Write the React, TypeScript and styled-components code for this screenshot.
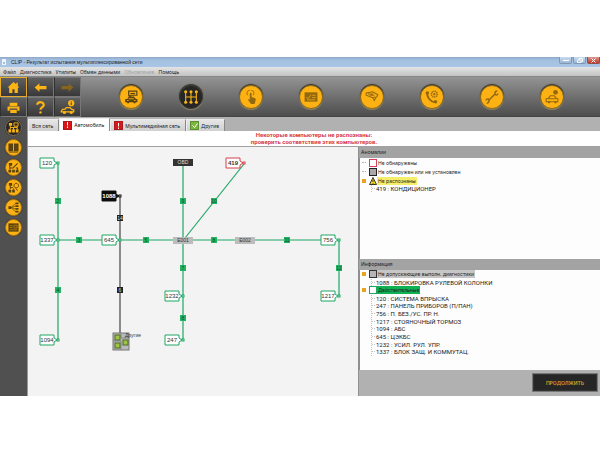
import React from 'react';
import styled, { createGlobalStyle, css } from 'styled-components';

const GREEN = '#1fa764';
const AMBER = '#fdb515';

const GlobalStyle = createGlobalStyle`
  * { box-sizing: border-box; }
  body { margin: 0; background: #fff; font: 5px/8px Inter, "Liberation Sans", Arial, sans-serif; color: #222; }
  button { font: inherit; color: inherit; border: 0; padding: 0; margin: 0; background: none; }
  ul { list-style: none; margin: 0; padding: 0; }
  svg { display: block; flex: none; }
`;

const Window = styled.div`
  margin-top: 57px;
  background: #b1b1b1;
  display: flex;
  flex-direction: column;
`;

const TitleBar = styled.header`
  display: flex;
  align-items: center;
  gap: 5px;
  height: 10px;
  padding-left: 2px;
  background: linear-gradient(#8fa9c8, #a3c0e1 30%, #aac6e6);
`;
const Title = styled.h1`
  margin: 0;
  flex: 1;
  font: 400 5px/8px "Liberation Sans", Arial, sans-serif;
  white-space: nowrap;
`;
const WindowButtons = styled.div`
  display: flex;
  gap: 1px;
  align-self: flex-start;
`;
const WindowButton = styled.button<{ $close?: boolean }>`
  width: 13px;
  height: 7px;
  display: grid;
  place-items: center;
  border: 1px solid ${p => (p.$close ? '#9b4b45' : '#8097b3')};
  border-top: 0;
  border-radius: 0 0 2px 2px;
  background: ${p => (p.$close ? 'linear-gradient(#dc9a8e, #c03a2c)' : 'linear-gradient(#c9dcf0, #9db7d4)')};
`;

const MenuBar = styled.nav`
  display: flex;
  gap: 4px;
  height: 10px;
  padding: 0 3px;
  background: linear-gradient(#e4e4e4, #c3c3c3);
  border-bottom: 1px solid #868686;
`;
const MenuItem = styled.button`
  white-space: nowrap;
  &:disabled { color: #a3a3a3; }
`;

const Toolbar = styled.div`
  display: flex;
  height: 40px;
  background: linear-gradient(#949494, #707070 50%, #4d4d4d);
  border-bottom: 1px solid #444;
`;
const NavGrid = styled.div`
  display: grid;
  grid-template-columns: repeat(3, 27px);
  grid-template-rows: repeat(2, 20px);
`;
const NavButton = styled.button<{ $active?: boolean }>`
  display: grid;
  place-items: center;
  color: ${AMBER};
  background: linear-gradient(#606060, #383838);
  border: 1px solid ${p => (p.$active ? '#e8ac2c' : '#777')};
  border-left-color: ${p => (p.$active ? '#e8ac2c' : '#303030')};
  &:disabled { color: #87651e; }
`;
const ModeRow = styled.div`
  flex: 1;
  display: flex;
  align-items: center;
  justify-content: space-between;
  padding: 0 36px 0 38px;
`;
const round = css<{ $dark?: boolean }>`
  display: grid;
  place-items: center;
  flex: none;
  border-radius: 50%;
  color: ${p => (p.$dark ? AMBER : '#5a4310')};
  background: ${p => (p.$dark ? '#262626' : '#fdb112')};
`;
const ModeButton = styled.button<{ $dark?: boolean; $strong?: boolean }>`
  ${round}
  width: 24px;
  height: 24px;
  border: 1px solid ${p => (p.$dark ? '#3b3b3b' : '#8a6a22')};
  box-shadow: 0 -1px 1px #3a3426, 0 1px 1px #8d8163;
  svg { opacity: ${p => (p.$strong || p.$dark ? 1 : 0.65)}; }
`;

const Body = styled.div`
  display: grid;
  grid-template-columns: 28px minmax(0, 1fr);
`;
const SideBar = styled.aside`
  display: flex;
  flex-direction: column;
  align-items: center;
  gap: 3px;
  padding: 2px 1px 0 0;
  background: #505050;
  border-right: 1px solid #999;
`;
const SideButton = styled.button<{ $dark?: boolean }>`
  ${round}
  width: 17px;
  height: 17px;
  border: 1px solid ${p => (p.$dark ? '#86735a' : '#a9771b')};
  box-shadow: 0 0 1px #251c0d;
`;

const Content = styled.main`
  display: flex;
  flex-direction: column;
  min-width: 0;
`;
const Tabs = styled.div`
  display: flex;
  align-items: flex-end;
  height: 14px;
`;
const Tab = styled.button<{ $active?: boolean }>`
  display: flex;
  align-items: center;
  gap: 2px;
  height: ${p => (p.$active ? 13 : 12)}px;
  padding: 0 5px 0 3px;
  white-space: nowrap;
  background: ${p => (p.$active ? '#fff' : 'linear-gradient(#e6e6e6, #d0d0d0)')};
  border: 1px solid #ededed;
  border-right-color: #888;
  border-bottom: 0;
`;
const StatusMark = styled.span<{ $ok?: boolean }>`
  width: 9px;
  height: 9px;
  display: grid;
  place-items: center;
  color: #fff;
  background: ${p => (p.$ok ? '#78b83a' : '#d9171b')};
  border: 1px solid ${p => (p.$ok ? '#5d8d35' : '#a91c1e')};
`;
const Message = styled.p`
  margin: 0;
  height: 16px;
  font: 700 6px/7px Roboto, "Liberation Sans", sans-serif;
  text-align: center;
  color: #d83a48;
  background: #fff;
  border-bottom: 1px solid #a0a0a0;
`;
const Split = styled.div`
  display: grid;
  grid-template-columns: minmax(0, 1fr) 241px;
`;
const Canvas = styled.section`
  background: #f3f3f3;
  overflow: hidden;
  border-right: 1px solid #8f8f8f;
`;
const Panels = styled.div`
  display: flex;
  flex-direction: column;
`;
const PanelTitle = styled.h2`
  margin: 0;
  height: 11px;
  padding: 0 2px;
  font-size: 5px;
  line-height: 11px;
  font-weight: 400;
  background: #a3a3a3;
`;
const PanelBody = styled.div`
  flex: 1;
  background: #fdfdfd;
  border-left: 1px solid #909090;
  padding: 0 2px;
`;
const Category = styled.div`
  display: flex;
  align-items: center;
  height: 9px;
  white-space: nowrap;
`;
const Expander = styled.button`
  width: 4px;
  height: 4px;
  margin-right: 3px;
  background: #eda21f;
`;
const Twig = styled.span`
  width: 4px;
  height: 1px;
  margin-right: 3px;
  border-top: 1px dotted #b5b5b5;
`;
const Swatch = styled.span<{ $line: string; $fill: string }>`
  width: 8px;
  height: 8px;
  border: 1px solid ${p => p.$line};
  background: ${p => p.$fill};
`;
const CategoryName = styled.span<{ $bg?: string }>`
  height: 8px;
  padding: 0 1px;
  background: ${p => p.$bg ?? 'transparent'};
`;
const Leaves = styled.ul`
  display: grid;
  grid-auto-rows: 1fr;
  font: 6px/7px Roboto, "Liberation Sans", sans-serif;
  margin-left: 9px;
  border-left: 1px dotted #c4c4c4;
`;
const LongLeaves = styled(Leaves)`
  height: 61px;
`;
const Leaf = styled.li`
  display: flex;
  align-items: center;
  gap: 1px;
  white-space: pre;
  &::before { content: ''; width: 3px; border-top: 1px dotted #c4c4c4; }
`;
const Footer = styled.footer`
  display: flex;
  justify-content: flex-end;
  height: 26px;
  padding: 3px 2px 4px;
  background: #b1b1b1;
`;
const Continue = styled.button`
  width: 66px;
  font-weight: 600;
  color: #dba324;
  background: #262626;
  border: 2px solid #343434;
  outline: 1px solid #777;
  outline-offset: -1px;
`;

type Art = { d?: string; fill?: string; extra?: React.ReactNode; w?: number };
const art: Record<string, Art> = {
  home: { fill: 'M12 2 1 12h3v10h6v-7h4v7h6V12h3l-3-3V3h-3v3z' },
  back: { fill: 'M1 12 10 4v5h13v6H10v5z' },
  next: { fill: 'M23 12 14 4v5H1v6h13v5z' },
  print: { fill: 'M5 3h14v6H5zM1 10h22v8h-4v-4H5v4H1zM6 16h12v6H6z' },
  help: { d: 'M6 7c0-7 13-6 12 1-1 4-6 4-6 8', w: 4, extra: <circle cx="12" cy="21" r="2.3" fill="currentColor" /> },
  carInfo: {
    d: 'M2 18l2-3h4l2-3h6l3 3 3 1v3H2z', w: 2,
    extra: <><circle cx="18" cy="5" r="5" fill="currentColor" /><path d="M18 2v1m0 1v4" stroke="#383838" strokeWidth="1.6" /><circle cx="7" cy="20" r="2.5" fill="currentColor" /><circle cx="18" cy="20" r="2.5" fill="currentColor" /></>,
  },
  carScreen: {
    fill: 'M2 16l4-1 3-4h8l3 4 3 1v5H2z',
    extra: <><path d="M8 2h14v7H12l-3 3V9H8z" fill="none" stroke="currentColor" strokeWidth="2" /><path d="M11 6h8" stroke="currentColor" strokeWidth="2" /><circle cx="7" cy="21" r="2" fill="currentColor" /><circle cx="18" cy="21" r="2" fill="currentColor" /><path d="M8 15h9M5 18h3M17 18h3" stroke="#fdb112" strokeWidth="1.5" /></>,
  },
  gear: {
    d: 'M4 5v14M12 5v14M20 5v14M4 12h16', w: 1.6,
    extra: <g fill="currentColor">{[4, 12, 20].map(x => <g key={x}><circle cx={x} cy="4" r="2.3" /><circle cx={x} cy="20" r="2.3" /></g>)}</g>,
  },
  touch: { d: 'M6 9a6 6 0 1 1 10 0', w: 1.5, fill: 'M10 6c0-2 3-2 3 0v6l6 2c2 1 1 5 0 7l-1 3h-6l-5-7c0-2 2-2 3 0z' },
  card: { fill: 'M1 4h22v16H1z', extra: <path d="M4 12l3 3 5-7M14 9h6M14 13h6M5 17h14" fill="none" stroke="#fdb112" strokeWidth="1.2" /> },
  key: { d: 'M2 5l11-2 9 5-2 4-8 1-10-4zM13 13l3 5 3-6M5 7h9M8 9h8', w: 1.8 },
  phone: {
    d: 'M4 4c-2 8 6 17 14 17', w: 3,
    extra: <><circle cx="4" cy="5" r="3" fill="currentColor" /><circle cx="18" cy="20" r="3" fill="currentColor" /><circle cx="16" cy="7" r="5" fill="none" stroke="currentColor" strokeWidth="2.5" strokeDasharray="2 1" /><circle cx="16" cy="7" r="2" fill="currentColor" /></>,
  },
  wrench: { d: 'M6 18 18 6M2 18c0-4 6-3 5 1-1 3-3 4-4 3M22 6c0 4-6 3-5-1 1-3 3-4 4-3', w: 2.5 },
  carTool: {
    d: 'M2 15l4-1 3-4h7l3 4 3 1v5H2zM6 15h13', w: 1.8,
    extra: <><circle cx="18" cy="4" r="4" fill="currentColor" /><circle cx="7" cy="21" r="2" fill="currentColor" /><circle cx="18" cy="21" r="2" fill="currentColor" /></>,
  },
  network: { fill: 'M2 2h7v6H2zM1 16h6v7H1zM9 16h6v7H9zM17 16h6v7h-6z', d: 'M5 8v8M12 12v4M20 9v7M5 12h15M13 2h9v7h-9z', w: 2 },
  book: { fill: 'M1 3h10v17H1zM13 3h10v17H13z', d: 'M2 22h20', w: 2 },
  edit: { fill: 'M2 2h7v6H2zM1 17h6v6H1zM9 17h6v6H9zM17 17h6v6h-6z', d: 'M4 8v8M4 13h8M11 13 21 3M17 13h4v4', w: 2.4 },
  scan: { fill: 'M2 2h7v6H2zM1 17h6v6H1zM9 17h6v6H9z', d: 'M5 8v8M5 12h6M12 17v-3M18 13a5 5 0 1 1 .1 0M17 14l4 5', w: 2 },
  tree: { fill: 'M1 9h6v6H1zM16 1h7v4h-7zM16 7h7v4h-7zM16 13h7v4h-7zM16 19h7v4h-7z', d: 'M7 12l9-9M7 12l9-3M7 12l9 3M7 12l9 9', w: 1.5 },
  screen: { fill: 'M1 3h22v18H1z', extra: <path d="M4 8h6M4 12h6M13 7h7v6h-7zM4 17h16" fill="none" stroke="#fdb112" strokeWidth="1" /> },
};
const Glyph = ({ name, size }: { name: string; size: number }) => {
  const a = art[name];
  return (
    <svg width={size} height={size} viewBox="0 0 24 24" aria-hidden="true">
      {a.fill && <path d={a.fill} fill="currentColor" />}
      {a.d && <path d={a.d} fill="none" stroke="currentColor" strokeWidth={a.w} />}
      {a.extra}
    </svg>
  );
};

const Warning = () => (
  <svg width="8" height="8" viewBox="0 0 16 16" aria-hidden="true">
    <path d="M8 1 15 15H1z" fill="#f2d71f" stroke="#222" strokeWidth="1.8" />
    <path d="M8 6v4M8 12v1.5" stroke="#222" strokeWidth="1.8" />
  </svg>
);

const DiagramText = styled.text<{ $size: number }>`
  font-family: "Liberation Sans", Arial, sans-serif;
  font-size: ${p => p.$size}px;
  text-anchor: middle;
`;

type TagProps = { x: number; y: number; id: string; kind?: 'ok' | 'lost' | 'blocked' };
const Tag = ({ x, y, id, kind = 'ok' }: TagProps) => {
  const line = kind === 'ok' ? GREEN : kind === 'lost' ? '#d6404c' : '#111';
  return (
    <g>
      <path
        d={`M${x - 18} ${y - 5}h14v3l3 2-3 2v3h-14z`}
        fill={kind === 'blocked' ? '#0b0b0b' : '#fff'} stroke={line}
      />
      <rect x={x - 1} y={y - 1} width="2" height="2" fill="#fff" stroke={line} />
      <DiagramText $size={6} x={x - 11} y={y + 2} fill={kind === 'blocked' ? '#fff' : '#333'} fontWeight={kind === 'ok' ? 400 : 700}>{id}</DiagramText>
    </g>
  );
};
const Hub = ({ x, y, id, dark }: { x: number; y: number; id: string; dark?: boolean }) => (
  <g>
    <rect x={x - 10} y={y - 4} width="20" height="7" fill={dark ? '#333' : '#bcbcbc'} />
    <DiagramText $size={5} x={x} y={y + 1} fill={dark ? '#ddd' : '#333'}>{id}</DiagramText>
  </g>
);
const Joint = ({ x, y, id, dark }: { x: number; y: number; id: string; dark?: boolean }) => (
  <g>
    <rect x={x - 3} y={y - 3} width="6" height="6" fill={dark ? '#222' : '#22b262'} />
    <DiagramText $size={5} x={x} y={y + 2} fill={dark ? '#ddd' : '#0b4f2b'}>{id}</DiagramText>
  </g>
);

const joints: [number, number, string, boolean?][] = [
  [30, 54, '2'], [51, 93, '3'], [30, 143, '4'], [92, 71, '14', true], [118, 93, '5'], [92, 143, '6', true],
  [155, 54, '9'], [186, 54, '10'], [186, 93, '8'], [259, 93, '11'], [155, 121, '7'], [311, 121, '12'], [155, 171, '8'],
];

const Diagram = () => (
  <svg width="331" height="249" viewBox="0 0 331 249" role="img" aria-label="Автомобиль">
    <path d="M30 16V193M30 93H311V149M155 16V193M157 91 216 17" fill="none" stroke={GREEN} strokeWidth="1.2" />
    <path d="M92 49V187" stroke="#444" strokeWidth="1.2" />
    {joints.map(([x, y, id, dark], i) => <Joint key={i} x={x} y={y} id={id} dark={dark} />)}
    <Hub x={155} y={16} id="OBD" dark />
    <Hub x={155} y={94} id="E001" />
    <Hub x={217} y={94} id="E002" />
    <Tag x={30} y={16} id="120" />
    <Tag x={30} y={93} id="1337" />
    <Tag x={30} y={193} id="1094" />
    <Tag x={92} y={49} id="1088" kind="blocked" />
    <Tag x={92} y={93} id="645" />
    <Tag x={216} y={16} id="419" kind="lost" />
    <Tag x={155} y={149} id="1232" />
    <Tag x={155} y={193} id="247" />
    <Tag x={311} y={93} id="756" />
    <Tag x={311} y={149} id="1217" />
    <rect x="85" y="186" width="16" height="17" fill="#b9b9b9" stroke="#777" />
    <path d="M85 194h8v9M93 186v5h8" fill="none" stroke="#888" />
    {[[87, 188], [87, 196], [95, 193]].map(([x, y]) => (
      <rect key={`${x}-${y}`} x={x} y={y} width="5" height="5" fill="#9fc343" stroke="#4d6a2a" />
    ))}
    <DiagramText $size={5} x={105} y={190} fill="#333">Другие</DiagramText>
  </svg>
);

const menus = ['Файл', 'Диагностика', 'Утилиты', 'Обмен данными', 'Обновление', 'Помощь'];
const nav = [['home', 'Главная'], ['back', 'Назад'], ['next', 'Вперёд'], ['print', 'Печать'], ['help', 'Справка'], ['carInfo', 'Сведения']];
const modes = ['carScreen', 'gear', 'touch', 'card', 'key', 'phone', 'wrench', 'carTool'];
const tools = ['network', 'book', 'edit', 'scan', 'tree', 'screen'];
const found = [
  '120 : СИСТЕМА ВПРЫСКА', '247 : ПАНЕЛЬ ПРИБОРОВ (П/ПАН)', '756 : П. БЕЗ./УС. ПР. Н.', '1217 : СТОЯНОЧНЫЙ ТОРМОЗ',
  '1094 : АБС', '645 : ЦЭКБС', '1232 : УСИЛ. РУЛ. УПР.', '1337 : БЛОК ЗАЩ. И КОММУТАЦ.',
];

const Alert = () => (
  <StatusMark><svg width="3" height="6" viewBox="0 0 3 6"><path d="M1.5 0v3.5M1.5 4.5V6" stroke="currentColor" /></svg></StatusMark>
);

export default function App() {
  return (
    <>
      <GlobalStyle />
      <Window>
        <TitleBar>
          <svg width="4" height="6" viewBox="0 0 4 6" aria-hidden="true"><path d="M0 0h4v6H0z" fill="#eef3f8" /><path d="M1 4h2" stroke="#7b8ba0" /></svg>
          <Title>CLIP - Результат испытания мультиплексированной сети</Title>
          <WindowButtons>
            <WindowButton aria-label="Свернуть"><svg width="6" height="3"><path d="M0 1h6v1H0z" fill="#fff" /></svg></WindowButton>
            <WindowButton aria-label="Развернуть"><svg width="6" height="5" viewBox="0 0 6 5"><path d="M2 2V.5h3.5v3H4M.5 2H4v2.5H.5z" fill="none" stroke="#f6f9fc" /></svg></WindowButton>
            <WindowButton $close aria-label="Закрыть"><svg width="5" height="5" viewBox="0 0 5 5"><path d="M.5.5l4 4M4.5.5l-4 4" stroke="#fff" /></svg></WindowButton>
          </WindowButtons>
        </TitleBar>
        <MenuBar>
          {menus.map(m => <MenuItem key={m} disabled={m === 'Обновление'}>{m}</MenuItem>)}
        </MenuBar>
        <Toolbar>
          <NavGrid>
            {nav.map(([n, label]) => (
              <NavButton key={n} $active={n === 'home'} disabled={n === 'next'} aria-label={label}><Glyph name={n} size={n === 'carInfo' ? 15 : 13} /></NavButton>
            ))}
          </NavGrid>
          <ModeRow>
            {modes.map(n => (
              <ModeButton key={n} $dark={n === 'gear'} $strong={n === 'carScreen'} aria-label={n}><Glyph name={n} size={n === 'gear' ? 16 : 14} /></ModeButton>
            ))}
          </ModeRow>
        </Toolbar>
        <Body>
          <SideBar>
            {tools.map(n => <SideButton key={n} $dark={n === 'network'} aria-label={n}><Glyph name={n} size={11} /></SideButton>)}
          </SideBar>
          <Content>
            <Tabs role="tablist">
              <Tab role="tab">Вся сеть</Tab>
              <Tab role="tab" $active aria-selected><Alert />Автомобиль</Tab>
              <Tab role="tab"><Alert />Мультимедийная сеть</Tab>
              <Tab role="tab">
                <StatusMark $ok><svg width="6" height="5" viewBox="0 0 6 5"><path d="M.5 2.5l2 2 3-4" fill="none" stroke="currentColor" /></svg></StatusMark>
                Другие
              </Tab>
            </Tabs>
            <Message>Некоторые компьютеры не распознаны:<br />проверить соответствие этих компьютеров.</Message>
            <Split>
              <Canvas><Diagram /></Canvas>
              <Panels>
                <PanelTitle>Аномалии</PanelTitle>
                <PanelBody>
                  <Category><Twig /><Swatch $line="#d8405c" $fill="#fff" /><CategoryName>Не обнаружены</CategoryName></Category>
                  <Category><Twig /><Swatch $line="#222" $fill="#a8a8a8" /><CategoryName>Не обнаружен или не установлен</CategoryName></Category>
                  <Category><Expander aria-label="Свернуть" /><Warning /><CategoryName $bg="#f5ee6a">Не распознаны</CategoryName></Category>
                  <Leaves><Leaf>419 : КОНДИЦИОНЕР</Leaf></Leaves>
                </PanelBody>
                <PanelTitle>Информация</PanelTitle>
                <PanelBody>
                  <Category><Expander aria-label="Свернуть" /><Swatch $line="#333" $fill="#b5b5b5" /><CategoryName $bg="#c6c6c6">Не допускающие выполн. диагностики</CategoryName></Category>
                  <Leaves><Leaf>1088 : БЛОКИРОВКА РУЛЕВОЙ КОЛОНКИ</Leaf></Leaves>
                  <Category><Expander aria-label="Свернуть" /><Swatch $line={GREEN} $fill="#fff" /><CategoryName $bg="#10b055">Действительные</CategoryName></Category>
                  <LongLeaves>{found.map(f => <Leaf key={f}>{f}</Leaf>)}</LongLeaves>
                </PanelBody>
                <Footer><Continue>ПРОДОЛЖИТЬ</Continue></Footer>
              </Panels>
            </Split>
          </Content>
        </Body>
      </Window>
    </>
  );
}
